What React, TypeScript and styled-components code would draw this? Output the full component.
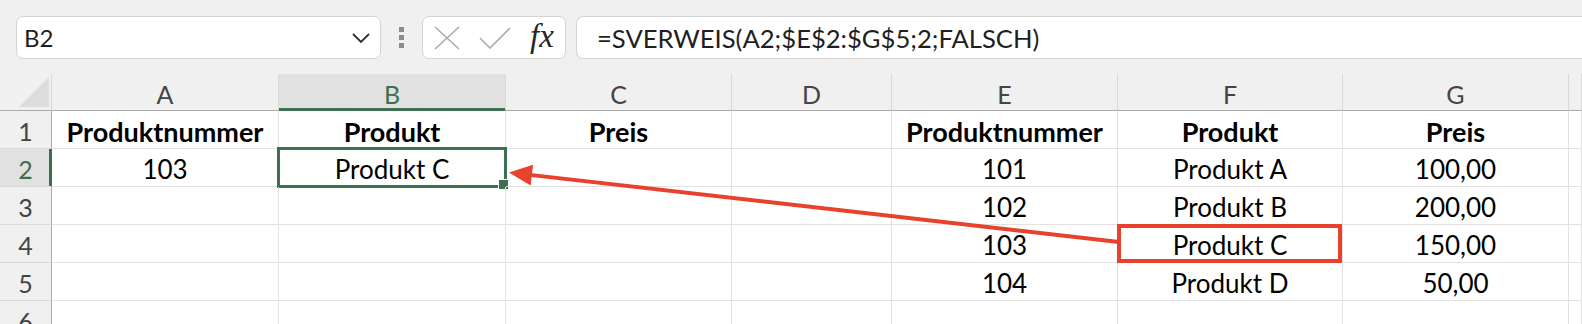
import React from 'react'
import styled, { createGlobalStyle } from 'styled-components'

const GREEN = '#3b7150'
const RED = '#e8412c'
const GRID = '#e1e1e1'
const HEAD_BG = '#f0f0f0'
const HEAD_SEL = '#e1e1e1'
const HEAD_LINE = '#aaaaaa'

const GlobalStyle = createGlobalStyle`
  * { box-sizing: border-box; }
  body {
    margin: 0;
    background: #ffffff;
    font-family: Lato, 'Open Sans', sans-serif;
  }
`

const Page = styled.div`
  width: 1582px;
  height: 324px;
  overflow: hidden;
  background: ${HEAD_BG};
`

const Toolbar = styled.div`
  height: 74px;
  display: flex;
  align-items: flex-start;
  padding: 16px 0 0 16px;
  background: ${HEAD_BG};
`

const Box = styled.div`
  height: 43px;
  background: #ffffff;
  border: 1px solid #d4d4d4;
  border-radius: 7px;
  display: flex;
  align-items: center;
`

const NameBox = styled(Box)`
  width: 365px;
  padding: 0 9px 0 7px;
  justify-content: space-between;
  font-size: 24px;
  color: #1f1f1f;
`

const Grip = styled.div`
  display: flex;
  flex-direction: column;
  gap: 3px;
  margin: 0 18px;
  padding-top: 11px;

  span {
    width: 5px;
    height: 5px;
    background: #8c8c8c;
  }
`

const FxBox = styled(Box)`
  width: 144px;
  padding: 0 0 0 11px;
  gap: 19px;
`

const FxLabel = styled.span`
  font-family: 'Liberation Serif', 'DejaVu Serif', serif;
  font-style: italic;
  font-size: 33px;
  color: #262626;
  line-height: 1;
  padding-bottom: 3px;
`

const FormulaBox = styled(Box)`
  flex: 1;
  margin-left: 10px;
  margin-right: -20px;
  padding-left: 20px;
  font-size: 25.6px;
  color: #1f1f1f;
  border-right: none;
  border-radius: 7px 0 0 7px;
`

const Sheet = styled.div`
  position: relative;
  display: grid;
  grid-template-columns: 52px 227px 227px 226px 160px 226px 225px 226px 1fr;
  grid-template-rows: 37px repeat(6, 38px);
  background: #ffffff;
`

const Corner = styled.div`
  background: ${HEAD_BG};
  border-bottom: 1px solid ${HEAD_LINE};
  border-right: 1px solid #d9d9d9;
  position: relative;

  &::after {
    content: '';
    position: absolute;
    right: 2px;
    bottom: 3px;
    width: 30px;
    height: 30px;
    background: #dcdcdc;
    clip-path: polygon(100% 0, 100% 100%, 0 100%);
  }
`

const ColHead = styled.div<{ $selected?: boolean }>`
  background: ${(p) => (p.$selected ? HEAD_SEL : HEAD_BG)};
  border-right: 1px solid #d9d9d9;
  border-bottom: 1px solid ${(p) => (p.$selected ? GREEN : HEAD_LINE)};
  box-shadow: ${(p) => (p.$selected ? `inset 0 -2px 0 ${GREEN}` : 'none')};
  color: ${(p) => (p.$selected ? GREEN : '#444444')};
  font-size: 25px;
  display: flex;
  align-items: center;
  justify-content: center;
  padding-top: 3px;
`

const RowHead = styled.div<{ $selected?: boolean }>`
  background: ${(p) => (p.$selected ? HEAD_SEL : HEAD_BG)};
  border-right: 1px solid ${(p) => (p.$selected ? GREEN : HEAD_LINE)};
  box-shadow: ${(p) => (p.$selected ? `inset -2px 0 0 ${GREEN}` : 'none')};
  border-bottom: 1px solid #dadada;
  color: ${(p) => (p.$selected ? GREEN : '#444444')};
  font-size: 25px;
  display: flex;
  align-items: center;
  justify-content: center;
  padding-top: 3px;
`

const Cell = styled.div<{ $bold?: boolean }>`
  position: relative;
  border-right: 1px solid ${GRID};
  border-bottom: 1px solid ${GRID};
  font-size: ${(p) => (p.$bold ? '27px' : '26px')};
  font-weight: ${(p) => (p.$bold ? 700 : 400)};
  color: #000000;
  display: flex;
  align-items: center;
  justify-content: center;
  padding-top: 3px;
  white-space: nowrap;
`

const Selection = styled.div`
  position: absolute;
  top: -2px;
  left: -2px;
  right: -2px;
  bottom: -2px;
  border: 3px solid ${GREEN};
  pointer-events: none;
`

const Handle = styled.div`
  position: absolute;
  right: -5px;
  bottom: -5px;
  width: 11px;
  height: 11px;
  background: ${GREEN};
  border: 1px solid #ffffff;
`

const Marker = styled.div`
  position: absolute;
  top: -1px;
  left: -1px;
  right: 0;
  bottom: -1px;
  border: 4px solid ${RED};
  pointer-events: none;
`

const Overlay = styled.svg`
  position: absolute;
  left: 0;
  top: 0;
  width: 100%;
  height: 100%;
  pointer-events: none;
  overflow: visible;
`

const columns = ['A', 'B', 'C', 'D', 'E', 'F', 'G', '']

type CellData = { text?: string; bold?: boolean; selected?: boolean; marked?: boolean }

const rows: CellData[][] = [
  [
    { text: 'Produktnummer', bold: true },
    { text: 'Produkt', bold: true },
    { text: 'Preis', bold: true },
    {},
    { text: 'Produktnummer', bold: true },
    { text: 'Produkt', bold: true },
    { text: 'Preis', bold: true },
    {},
  ],
  [
    { text: '103' },
    { text: 'Produkt C', selected: true },
    {},
    {},
    { text: '101' },
    { text: 'Produkt A' },
    { text: '100,00' },
    {},
  ],
  [{}, {}, {}, {}, { text: '102' }, { text: 'Produkt B' }, { text: '200,00' }, {}],
  [{}, {}, {}, {}, { text: '103' }, { text: 'Produkt C', marked: true }, { text: '150,00' }, {}],
  [{}, {}, {}, {}, { text: '104' }, { text: 'Produkt D' }, { text: '50,00' }, {}],
  [{}, {}, {}, {}, {}, {}, {}, {}],
]

const Chevron = () => (
  <svg width='20' height='12' viewBox='0 0 20 12'>
    <polyline points='2,2 10,10 18,2' fill='none' stroke='#303030' strokeWidth='1.8' />
  </svg>
)

const CancelIcon = () => (
  <svg width='26' height='24' viewBox='0 0 26 24'>
    <path d='M1 1 L25 23 M25 1 L1 23' stroke='#ababab' strokeWidth='1.6' fill='none' />
  </svg>
)

const CheckIcon = () => (
  <svg width='32' height='22' viewBox='0 0 32 22'>
    <polyline points='1,11 11,21 31,1' fill='none' stroke='#ababab' strokeWidth='1.6' />
  </svg>
)

// arrow from F4 back to the result in B2, in sheet coordinates (sheet top = 74)
const Arrow = () => {
  const tip = { x: 509, y: 172.5 - 74 }
  const tail = { x: 1119, y: 242 - 74 }
  const dx = tail.x - tip.x
  const dy = tail.y - tip.y
  const len = Math.hypot(dx, dy)
  const ux = dx / len
  const uy = dy / len
  const bx = tip.x + ux * 23
  const by = tip.y + uy * 23
  const head = `${tip.x},${tip.y} ${bx - uy * 10.5},${by + ux * 10.5} ${bx + uy * 10.5},${by - ux * 10.5}`
  return (
    <Overlay>
      <line x1={tail.x} y1={tail.y} x2={bx - ux * 2} y2={by - uy * 2} stroke={RED} strokeWidth='4' />
      <polygon points={head} fill={RED} />
    </Overlay>
  )
}

export default function App() {
  return (
    <Page>
      <GlobalStyle />
      <Toolbar>
        <NameBox>
          <span>B2</span>
          <Chevron />
        </NameBox>
        <Grip>
          <span />
          <span />
          <span />
        </Grip>
        <FxBox>
          <CancelIcon />
          <CheckIcon />
          <FxLabel>fx</FxLabel>
        </FxBox>
        <FormulaBox>=SVERWEIS(A2;$E$2:$G$5;2;FALSCH)</FormulaBox>
      </Toolbar>
      <Sheet>
        <Corner />
        {columns.map((c) => (
          <ColHead key={c || 'H'} $selected={c === 'B'}>
            {c}
          </ColHead>
        ))}
        {rows.map((row, r) => (
          <React.Fragment key={r}>
            <RowHead $selected={r === 1}>{r + 1}</RowHead>
            {row.map((cell, c) => (
              <Cell key={c} $bold={cell.bold}>
                {cell.text}
                {cell.selected && (
                  <Selection>
                    <Handle />
                  </Selection>
                )}
                {cell.marked && <Marker />}
              </Cell>
            ))}
          </React.Fragment>
        ))}
        <Arrow />
      </Sheet>
    </Page>
  )
}
